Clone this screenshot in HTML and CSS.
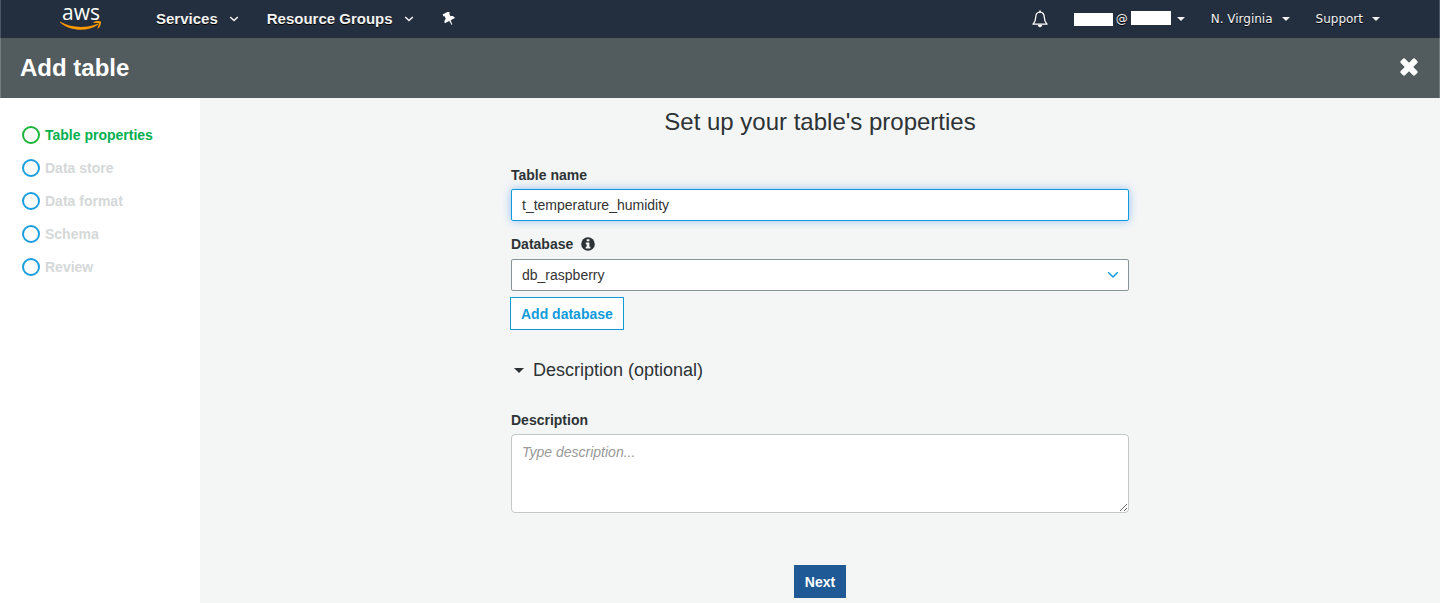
FILE: index.html
```html
<!DOCTYPE html>
<html lang="en">
<head>
<meta charset="utf-8">
<meta name="viewport" content="width=device-width, initial-scale=1">
<title>Add table</title>
<link rel="stylesheet" href="styles.css">
</head>
<body>
<header class="topbar">
  <nav class="topnav" aria-label="Services">
    <a class="logo" href="#" aria-label="aws">
      <span class="logo-text">aws</span>
      <svg class="logo-smile" width="42" height="10" viewBox="0 0 42 10" aria-hidden="true">
        <path d="M.4.8C11 7 26 7.500 37 2.900c.8-.3 1.500.6.7 1.200C28 11 10 10.600.1 1.600-.3 1.200 0 .6.4.8z" fill="#f90"/>
        <path d="M33.500 1.300c2.500-1.700 6.700-1.500 7.300-.8.6.8-.2 5-2.700 7-.4.3-.8.1-.6-.3.700-1.600 1.700-4.300 1.200-4.900s-3.200-.4-4.800-.3c-.5.100-.700-.4-.4-.7z" fill="#f90"/>
      </svg>
    </a>
    <button class="menu" type="button">Services
      <svg class="chevron" width="10" height="6" viewBox="0 0 10 6" aria-hidden="true"><path d="M1.200 1 5 4.500 8.800 1" fill="none" stroke="currentColor" stroke-width="1.600"/></svg>
    </button>
    <button class="menu" type="button">Resource Groups
      <svg class="chevron" width="10" height="6" viewBox="0 0 10 6" aria-hidden="true"><path d="M1.200 1 5 4.500 8.800 1" fill="none" stroke="currentColor" stroke-width="1.600"/></svg>
    </button>
    <button class="icon-button" type="button" aria-label="Pin shortcuts">
      <svg width="14" height="14" viewBox="0 0 14 14" aria-hidden="true"><g transform="rotate(-28 7 7)" fill="#fff"><path d="M3.500 0h7v2.200h-.8v3c1.700.6 3 1.800 3 3.700H1.300c0-1.900 1.300-3.100 3-3.700v-3h-.8z"/><path d="M6.200 8.400h1.600L7.300 13.500h-.6z"/></g></svg>
    </button>
  </nav>
  <div class="account">
    <button class="icon-button" type="button" aria-label="Notifications">
      <svg width="16" height="18" viewBox="0 0 16 18" aria-hidden="true"><path d="M8 2.200c-2.700 0-4.200 2-4.200 4.600 0 3.600-.9 5.300-2.800 7.400h14c-1.900-2.100-2.800-3.800-2.800-7.400 0-2.600-1.500-4.600-4.200-4.600z" fill="none" stroke="#fff" stroke-width="1.300" stroke-linejoin="round"/><path d="M7.200.6h1.600v2H7.200zM5.700 14.800h4.600c-.2 1.600-1 2.400-2.300 2.400s-2.100-.8-2.300-2.400z" fill="#fff"/></svg>
    </button>
    <button class="submenu user" type="button" aria-label="Account">
      <span class="mask"></span>@<span class="mask mask-host"></span>
      <svg class="caret" width="8" height="4" viewBox="0 0 8 4" aria-hidden="true"><path d="M0 0h8L4 4z" fill="currentColor"/></svg>
    </button>
    <button class="submenu" type="button">N. Virginia
      <svg class="caret" width="8" height="4" viewBox="0 0 8 4" aria-hidden="true"><path d="M0 0h8L4 4z" fill="currentColor"/></svg>
    </button>
    <button class="submenu" type="button">Support
      <svg class="caret" width="8" height="4" viewBox="0 0 8 4" aria-hidden="true"><path d="M0 0h8L4 4z" fill="currentColor"/></svg>
    </button>
  </div>
</header>
<div class="titlebar">
  <h1 class="title">Add table</h1>
  <button class="icon-button" type="button" aria-label="Close">
    <svg width="20" height="20" viewBox="0 0 20 20" aria-hidden="true"><path d="M2 4.200 4.200 2Q5 1.200 5.800 2L10 6.200 14.200 2q.8-.8 1.600 0L18 4.200q.8.8 0 1.600L13.800 10l4.200 4.200q.8.8 0 1.600L15.800 18q-.8.8-1.600 0L10 13.800 5.800 18q-.8.8-1.600 0L2 15.800q-.8-.8 0-1.600L6.200 10 2 5.800Q1.200 5 2 4.200z" fill="#fff" stroke="#fff" stroke-width=".8"/></svg>
  </button>
</div>
<div class="layout">
  <aside class="sidebar">
    <ol class="steps">
      <li class="step step-current" aria-current="step">Table properties</li>
      <li class="step">Data store</li>
      <li class="step">Data format</li>
      <li class="step">Schema</li>
      <li class="step">Review</li>
    </ol>
  </aside>
  <main class="content">
    <h2 class="heading">Set up your table's properties</h2>
    <form class="form">
      <div class="field">
        <label class="label" for="table-name">Table name</label>
        <input class="control control-active" id="table-name" type="text" value="t_temperature_humidity">
      </div>
      <div class="field">
        <div class="label-row">
          <label class="label" for="database">Database</label>
          <svg width="14" height="14" viewBox="0 0 14 14" aria-hidden="true"><circle cx="7" cy="7" r="6.800" fill="#2d3235"/><path d="M5.700 2.200h2.700v2H5.700zM4.800 5.500h3.600v4.300h1v1.700H4.700V9.800h1V7.200h-.9z" fill="#f4f6f6"/></svg>
        </div>
        <div class="select-wrap">
          <select class="control select" id="database"><option>db_raspberry</option></select>
          <svg class="select-arrow" width="12" height="8" viewBox="0 0 12 8" aria-hidden="true"><path d="M1.200 1.300 6 6l4.800-4.700" fill="none" stroke="#0f9bdb" stroke-width="1.400"/></svg>
        </div>
      </div>
      <button class="button button-outline" type="button">Add database</button>
      <button class="disclosure" type="button" aria-expanded="true">
        <svg width="10" height="5" viewBox="0 0 10 5" aria-hidden="true"><path d="M0 0h10L5 5z" fill="#2d3235"/></svg>
        Description (optional)
      </button>
      <div class="field">
        <label class="label" for="description">Description</label>
        <textarea class="control textarea" id="description" placeholder="Type description..."></textarea>
      </div>
      <button class="button button-primary" type="button">Next</button>
    </form>
  </main>
</div>
</body>
</html>
```

FILE: styles.css
```css
*,
*::before {
  box-sizing: border-box;
}

body {
  margin: 0;
  min-height: 100vh;
  display: flex;
  flex-direction: column;
  font: 14px/20px "Liberation Sans", Arial, sans-serif;
  color: #2d3235;
  background: #f4f6f6;
}

button {
  margin: 0;
  padding: 0;
  border: 0;
  background: none;
  color: inherit;
  font: inherit;
  cursor: pointer;
}

svg {
  display: block;
  flex: none;
}

.topbar {
  display: flex;
  justify-content: space-between;
  height: 38px;
  padding: 0 59px;
  border: solid #4b5663;
  border-width: 0 1px;
  background: #232f3e;
  color: #f3f3f3;
}

.topnav,
.account {
  display: flex;
  align-items: center;
}

.topnav {
  gap: 28px;
}

.account {
  gap: 26px;
}

.logo {
  width: 42px;
  height: 30px;
  margin-right: 26px;
  color: #fff;
  text-decoration: none;
}

.logo-text {
  display: block;
  height: 17px;
  font: 21px/16px "Open Sans", "Noto Sans", sans-serif;
  text-align: center;
}

.menu,
.submenu {
  display: flex;
  align-items: center;
  white-space: nowrap;
  text-shadow: 0 1px 0 #000;
}

.menu {
  gap: 11px;
  font-size: 15px;
  font-weight: bold;
}

.submenu {
  gap: 9px;
  font: 12px/20px "DejaVu Sans", sans-serif;
}

.user {
  gap: 3px;
}

.mask {
  width: 39px;
  height: 13px;
  background: #fff;
}

.mask-host {
  width: 40px;
  height: 14px;
  margin: 0 3px 2px 0;
}

.titlebar {
  display: flex;
  align-items: center;
  justify-content: space-between;
  height: 60px;
  padding: 0 20px 2px 19px;
  border: solid #747c7e;
  border-width: 0 1px;
  background: #525b5d;
  color: #fff;
}

.title {
  margin: 0;
  padding-top: 2px;
  font-size: 24px;
  line-height: 32px;
}

.layout {
  display: flex;
  flex: 1;
}

.sidebar {
  width: 200px;
  flex: none;
  background: #fff;
}

.steps {
  display: flex;
  flex-direction: column;
  gap: 13px;
  margin: 0;
  padding: 27px 22px;
  list-style: none;
}

.step {
  display: flex;
  align-items: center;
  gap: 5px;
  color: #d5d8d8;
  font-weight: bold;
  white-space: nowrap;
}

.step::before {
  content: "";
  width: 18px;
  height: 18px;
  border: 2px solid #1b9fdf;
  border-radius: 50%;
}

.step-current {
  color: #00b050;
}

.step-current::before {
  border-color: #1db53a;
}

.content {
  flex: 1;
  padding: 8px 20px 5px;
}

.heading {
  margin: 0 0 27px;
  font-size: 24px;
  font-weight: normal;
  line-height: 32px;
  text-align: center;
}

.form {
  display: flex;
  flex-direction: column;
  max-width: 618px;
  margin: 0 auto;
}

.field {
  display: flex;
  flex-direction: column;
  gap: 4px;
  margin-bottom: 13px;
}

.label-row {
  display: flex;
  align-items: center;
  gap: 8px;
  padding-bottom: 1px;
}

.label {
  font-weight: bold;
}

.control {
  width: 100%;
  height: 32px;
  margin: 0;
  padding: 0 10px;
  border: 1px solid #879596;
  border-radius: 2px;
  background: #fff;
  color: #333;
  font: inherit;
}

.control-active {
  border-color: #0f9bdb;
  box-shadow: 0 0 8px rgba(60, 140, 240, 0.5);
}

.select-wrap {
  position: relative;
}

.select {
  display: block;
  appearance: none;
}

.select-arrow {
  position: absolute;
  top: 12px;
  right: 10px;
  pointer-events: none;
}

.textarea {
  height: 79px;
  padding: 7px 10px;
  border-color: #c3c7c7;
  border-radius: 4px;
  resize: vertical;
}

.textarea::placeholder {
  color: #999;
  font-style: italic;
}

.button {
  height: 33px;
  padding: 0 10px;
  font-weight: bold;
}

.button-outline {
  align-self: flex-start;
  margin: -7px 0 0 -1px;
  border: 1px solid #0f9bdb;
  background: #fff;
  color: #0f9bdb;
}

.disclosure {
  display: flex;
  align-items: center;
  align-self: flex-start;
  gap: 9px;
  margin: 28px 0;
  padding-left: 3px;
  font-size: 18px;
  line-height: 24px;
}

.button-primary {
  align-self: center;
  margin-top: 39px;
  padding: 0 11px;
  background: #205a96;
  color: #fff;
}
```
